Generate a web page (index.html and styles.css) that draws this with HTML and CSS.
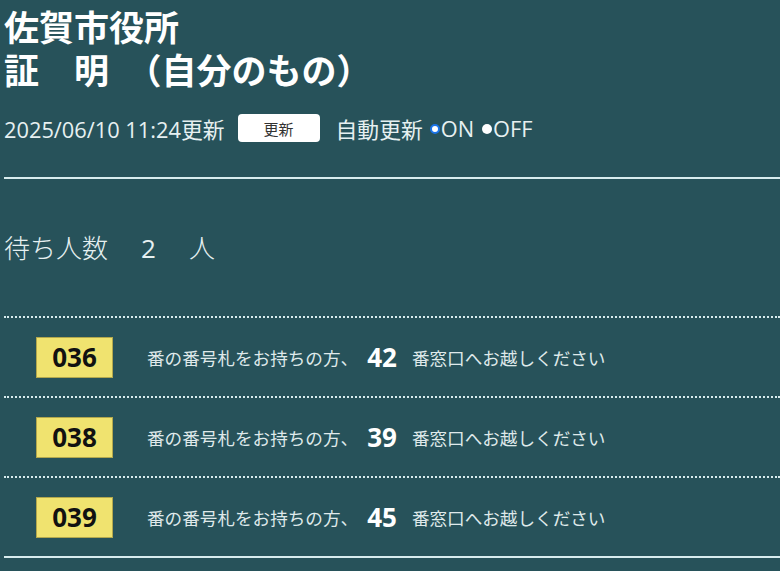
FILE: index.html
```html
<!DOCTYPE html>
<html>

<head>
    <meta charset="utf-8">
    <link rel="stylesheet" href="styles.css">
</head>

<body>
    <h1 class="title">佐賀市役所<br>証　明　（自分のもの）</h1>

    <div class="status">
        <span class="updated">2025/06/10 11:24更新</span>
        <button class="update-button">更新</button>
        <span class="auto">自動更新</span>
        <span class="radio checked"></span><span class="radio-label">ON</span>
        <span class="radio"></span><span class="radio-label">OFF</span>
    </div>

    <hr class="line">

    <div class="waiting">待ち人数　<span class="count">2</span>　人</div>

    <div class="calls">
        <div class="call">
            <div class="ticket">036</div>
            <div class="message">番の番号札をお持ちの方、<span class="window">42</span>番窓口へお越しください</div>
        </div>
        <div class="call">
            <div class="ticket">038</div>
            <div class="message">番の番号札をお持ちの方、<span class="window">39</span>番窓口へお越しください</div>
        </div>
        <div class="call">
            <div class="ticket">039</div>
            <div class="message">番の番号札をお持ちの方、<span class="window">45</span>番窓口へお越しください</div>
        </div>
    </div>
</body>

</html>
```

FILE: styles.css
```css
body {
    font-family: "Open Sans", "Noto Sans CJK JP", sans-serif;
    background-color: #27525a;
    color: #e6f0f1;
    margin: 0 0 0 4px;
    padding: 0;
    overflow: hidden;
}

.title {
    color: white;
    font-size: 35px;
    line-height: 43px;
    font-weight: bold;
    margin: 6px 0 0 0;
}

.status {
    display: flex;
    align-items: center;
    margin-top: 22px;
    height: 28px;
    font-size: 21.8px;
}

.update-button {
    font-family: "Noto Sans CJK JP", sans-serif;
    background-color: white;
    color: #333;
    border: none;
    width: 82px;
    height: 28px;
    margin: 0 16px 0 13px;
    border-radius: 4px;
    font-size: 15px;
    padding: 0;
}

.auto {
    margin-right: 7px;
}

.radio {
    width: 10px;
    height: 10px;
    border-radius: 50%;
    background-color: white;
    box-sizing: border-box;
    margin-top: 2px;
}

.radio.checked {
    border: 2px solid #1a73e8;
}

.radio-label {
    margin: 0 8px 0 1px;
}

.line {
    border: none;
    border-top: 2px solid #d8ecee;
    margin: 35px 0 0 0;
}

.waiting {
    font-size: 26px;
    line-height: 39px;
    font-weight: 300;
    margin-top: 50px;
}

.count {
    margin: 0 7px;
    font-weight: 400;
}

.calls {
    margin-top: 48px;
    border-top: 2px dotted #d8ecee;
    border-bottom: 2px solid #d8ecee;
}

.call {
    display: flex;
    align-items: center;
    height: 78px;
    padding-left: 32px;
}

.call + .call {
    border-top: 2px dotted #d8ecee;
}

.ticket {
    width: 77px;
    height: 41px;
    box-sizing: border-box;
    background-color: #f0e36f;
    border: 1px solid #b3a84d;
    color: #111;
    font-size: 26px;
    font-weight: bold;
    display: flex;
    align-items: center;
    justify-content: center;
}

.message {
    margin-left: 34px;
    font-size: 17.6px;
    display: flex;
    align-items: center;
    color: #dfe9ea;
}

.window {
    color: white;
    font-size: 26px;
    font-weight: bold;
    margin: 0 15px 0 9px;
}
```
